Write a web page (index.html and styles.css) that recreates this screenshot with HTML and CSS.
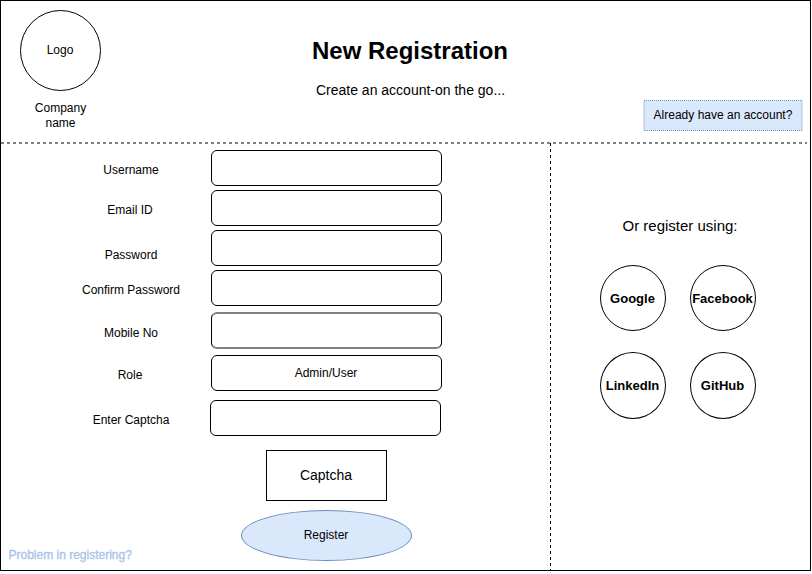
FILE: index.html
```html
<!DOCTYPE html>
<html lang="en">
<head>
<meta charset="utf-8">
<title>New Registration</title>
<link rel="stylesheet" href="styles.css">
</head>
<body>
<div class="frame">
  <header class="header">
    <div class="brand">
      <div class="logo">Logo</div>
      <div class="company">Company<br>name</div>
    </div>
    <div class="heading">
      <h1 class="title">New Registration</h1>
      <p class="subtitle">Create an account-on the go...</p>
    </div>
    <a class="account">
      <svg class="account-box" width="160" height="32" viewBox="0 0 160 32"><rect x="1" y="0.5" width="158" height="30" fill="#dae8fc" stroke="#6c8ebf" stroke-dasharray="1 1"/></svg>
      <span class="account-text">Already have an account?</span>
    </a>
  </header>
  <div class="divider"></div>
  <main class="main">
    <form class="form">
      <div class="row"><label class="label l-user">Username</label><div class="field"></div></div>
      <div class="row"><label class="label l-email">Email ID</label><div class="field"></div></div>
      <div class="row"><label class="label l-pass">Password</label><div class="field"></div></div>
      <div class="row r-confirm"><label class="label l-confirm">Confirm Password</label><div class="field"></div></div>
      <div class="row r-mobile"><label class="label l-mobile">Mobile No</label><div class="field soft"></div></div>
      <div class="row r-role"><label class="label l-role">Role</label><div class="field">Admin/User</div></div>
      <div class="row r-code"><label class="label l-code">Enter Captcha</label><div class="field shifted"></div></div>
      <div class="captcha">Captcha</div>
      <div class="register">Register</div>
      <a class="problem">Problem in registering?</a>
    </form>
    <div class="split"></div>
    <section class="social">
      <p class="social-title">Or register using:</p>
      <div class="providers">
        <div class="provider">Google</div>
        <div class="provider">Facebook</div>
        <div class="provider low">LinkedIn</div>
        <div class="provider low">GitHub</div>
      </div>
    </section>
  </main>
</div>
</body>
</html>
```
FILE: styles.css
```css
* { box-sizing: border-box; }
body {
  margin: 0;
  background: #fff;
  color: #000;
  font: 12px/14px "Liberation Sans", Arial, Helvetica, sans-serif;
}
.frame {
  width: 811px;
  height: 571px;
  border: 1px solid #000;
}
.header {
  display: flex;
  height: 141px;
}
.brand {
  width: 118px;
  padding-top: 9px;
  text-align: center;
}
.logo {
  width: 81px;
  height: 81px;
  margin-left: 19px;
  padding-right: 1px;
  border: 1px solid #000;
  border-radius: 50%;
  line-height: 79px;
}
.company {
  margin-top: 10px;
  padding-left: 1px;
  line-height: 15px;
}
.heading {
  width: 524px;
  padding: 35px 0 0 58px;
  text-align: center;
}
.title {
  margin: 0;
  font-size: 24px;
  line-height: 29px;
}
.subtitle {
  margin: 17px 0 0;
  padding-left: 1px;
  font-size: 14px;
  line-height: 17px;
}
.account {
  display: grid;
  width: 160px;
  height: 32px;
  margin-top: 99px;
}
.account-box, .account-text { grid-area: 1 / 1; }
.account-text {
  text-align: center;
  line-height: 30px;
}
.divider {
  width: 806px;
  height: 2px;
  background: repeating-linear-gradient(90deg, #808080 0 3px, transparent 3px 6px);
}
.main {
  display: flex;
  height: 429px;
}
.form {
  width: 549px;
  padding: 6px 0 0 70px;
}
.row {
  display: flex;
  gap: 20px;
  height: 40px;
}
.r-confirm { height: 42px; }
.r-mobile { height: 43px; }
.r-role { height: 45px; }
.r-code { height: 50px; }
.label {
  width: 120px;
  text-align: center;
}
.l-user, .l-email, .l-confirm, .l-role, .l-code { padding-top: 13px; }
.l-email, .l-role { padding-right: 2px; }
.l-pass { padding-top: 18px; }
.l-mobile { padding-top: 14px; }
.field {
  width: 231px;
  height: 36px;
  padding-right: 1px;
  border: 1px solid #000;
  border-radius: 6px;
  text-align: center;
  line-height: 35px;
}
.soft {
  height: 37px;
  border-width: 2px 1px;
  border-color: #808080 #000;
}
.shifted { margin-left: -1px; }
.captcha {
  width: 121px;
  height: 51px;
  margin-left: 195px;
  padding-right: 1px;
  border: 1px solid #000;
  font-size: 14px;
  line-height: 49px;
  text-align: center;
}
.register {
  width: 171px;
  height: 51px;
  margin: 9px 0 0 170px;
  padding-right: 1px;
  border: 1px solid #6c8ebf;
  border-radius: 50%;
  background: #dae8fc;
  line-height: 48px;
  text-align: center;
}
.problem {
  display: block;
  width: 124px;
  margin: -13px 0 0 -62.5px;
  color: #a9c4eb;
  -webkit-text-stroke: 0.35px #a9c4eb;
  white-space: nowrap;
}
.split {
  width: 1px;
  height: 430px;
  margin-top: -1px;
  background: repeating-linear-gradient(#000 0 3px, transparent 3px 6px);
}
.social {
  width: 259px;
  padding: 73px 0 0 49px;
}
.social-title {
  width: 160px;
  margin: 0;
  font-size: 15px;
  line-height: 18px;
  text-align: center;
}
.providers {
  display: grid;
  grid-template-columns: 66px 66px;
  column-gap: 24px;
  row-gap: 21px;
  margin-top: 30px;
}
.provider {
  display: flex;
  justify-content: center;
  height: 66px;
  padding-right: 1px;
  border: 1px solid #000;
  border-radius: 50%;
  font-size: 13px;
  font-weight: bold;
  line-height: 65px;
}
.low { height: 67px; }
```
